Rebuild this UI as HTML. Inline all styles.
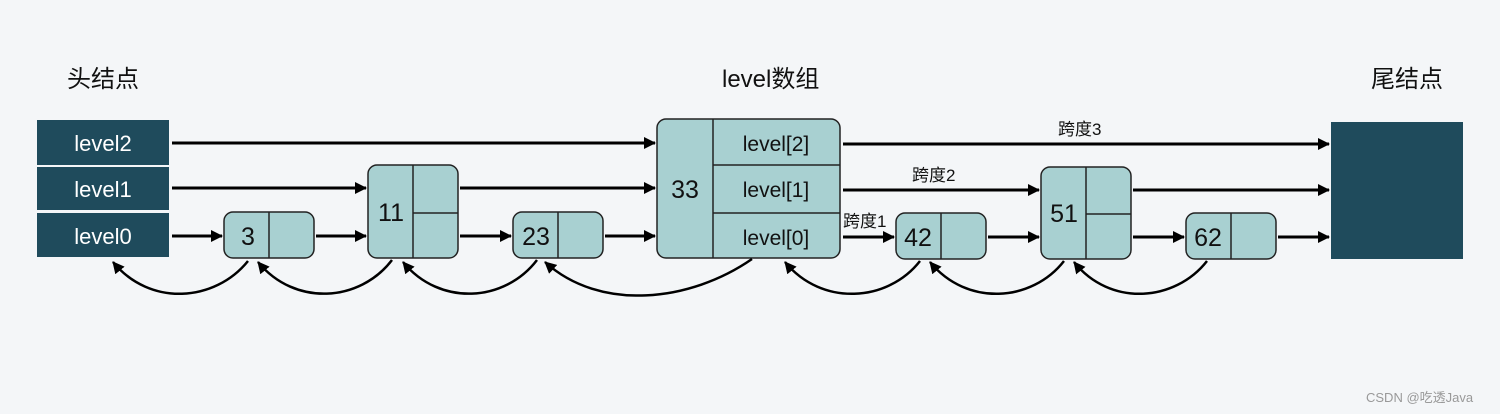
<!DOCTYPE html>
<html><head><meta charset="utf-8"><style>
html,body{margin:0;padding:0;background:#f4f6f8;}
svg{display:block}
text{font-family:"Liberation Sans","Noto Sans CJK SC",sans-serif;}
</style></head><body>
<svg width="1500" height="414" viewBox="0 0 1500 414" xmlns="http://www.w3.org/2000/svg">
<defs>
<marker id="a" markerWidth="12" markerHeight="12" refX="11" refY="6" orient="auto" markerUnits="userSpaceOnUse">
<path d="M0,0 L12,6 L0,12 z" fill="#000"/>
</marker>
</defs>
<rect width="1500" height="414" fill="#f4f6f8"/>
<g font-size="24" fill="#111">
<text x="67" y="87">头结点</text>
<text x="722" y="87">level数组</text>
<text x="1371" y="87">尾结点</text>
</g>
<g fill="#1f4b5c">
<rect x="37" y="120" width="132" height="45"/>
<rect x="37" y="167" width="132" height="43"/>
<rect x="37" y="213" width="132" height="44"/>
<rect x="1331" y="122" width="132" height="137"/>
</g>
<g fill="#fff" font-size="22" text-anchor="middle">
<text x="103" y="151">level2</text>
<text x="103" y="197">level1</text>
<text x="103" y="244">level0</text>
</g>
<g fill="#a8d0d1" stroke="#222" stroke-width="1.5">
<rect x="224" y="212" width="90" height="46" rx="9"/>
<line x1="269" y1="212" x2="269" y2="258"/>
<rect x="368" y="165" width="90" height="93" rx="9"/>
<line x1="413" y1="165" x2="413" y2="258"/><line x1="413" y1="213" x2="458" y2="213"/>
<rect x="513" y="212" width="90" height="46" rx="9"/>
<line x1="558" y1="212" x2="558" y2="258"/>
<rect x="657" y="119" width="183" height="139" rx="9"/>
<line x1="713" y1="119" x2="713" y2="258"/><line x1="713" y1="165" x2="840" y2="165"/><line x1="713" y1="213" x2="840" y2="213"/>
<rect x="896" y="213" width="90" height="46" rx="9"/>
<line x1="941" y1="213" x2="941" y2="259"/>
<rect x="1041" y="167" width="90" height="92" rx="9"/>
<line x1="1086" y1="167" x2="1086" y2="259"/><line x1="1086" y1="214" x2="1131" y2="214"/>
<rect x="1186" y="213" width="90" height="46" rx="9"/>
<line x1="1231" y1="213" x2="1231" y2="259"/>
</g>
<g fill="#111" font-size="25" text-anchor="middle">
<text x="248" y="245">3</text>
<text x="391" y="221">11</text>
<text x="536" y="245">23</text>
<text x="685" y="198">33</text>
<text x="918" y="246">42</text>
<text x="1064" y="222">51</text>
<text x="1208" y="246">62</text>
</g>
<g fill="#111" font-size="21" text-anchor="middle">
<text x="776" y="151">level[2]</text>
<text x="776" y="197">level[1]</text>
<text x="776" y="245">level[0]</text>
</g>
<g fill="#111" font-size="17">
<text x="1058" y="135">跨度3</text>
<text x="912" y="181">跨度2</text>
<text x="843" y="227">跨度1</text>
</g>
<g stroke="#000" stroke-width="3" marker-end="url(#a)" fill="none">
<line x1="172" y1="143" x2="655" y2="143"/>
<line x1="172" y1="188" x2="366" y2="188"/>
<line x1="460" y1="188" x2="655" y2="188"/>
<line x1="172" y1="236" x2="222" y2="236"/>
<line x1="316" y1="236" x2="366" y2="236"/>
<line x1="460" y1="236" x2="511" y2="236"/>
<line x1="605" y1="236" x2="655" y2="236"/>
<line x1="843" y1="144" x2="1329" y2="144"/>
<line x1="843" y1="190" x2="1039" y2="190"/>
<line x1="1133" y1="190" x2="1329" y2="190"/>
<line x1="843" y1="237" x2="894" y2="237"/>
<line x1="988" y1="237" x2="1039" y2="237"/>
<line x1="1133" y1="237" x2="1184" y2="237"/>
<line x1="1278" y1="237" x2="1329" y2="237"/>
</g>
<g stroke="#000" stroke-width="2.5" fill="none" marker-end="url(#a)">
<path d="M248,261 C215,302 150,307 113,262"/>
<path d="M392,260 C360,302 295,307 258,262"/>
<path d="M537,260 C505,302 440,307 403,262"/>
<path d="M752,259 C690,302 600,312 545,262"/>
<path d="M920,261 C888,302 822,307 785,262"/>
<path d="M1064,261 C1032,302 967,307 930,262"/>
<path d="M1207,261 C1175,302 1110,307 1074,262"/>
</g>
<text x="1366" y="402" font-size="13" fill="#999">CSDN @吃透Java</text>
</svg>
</body></html>
